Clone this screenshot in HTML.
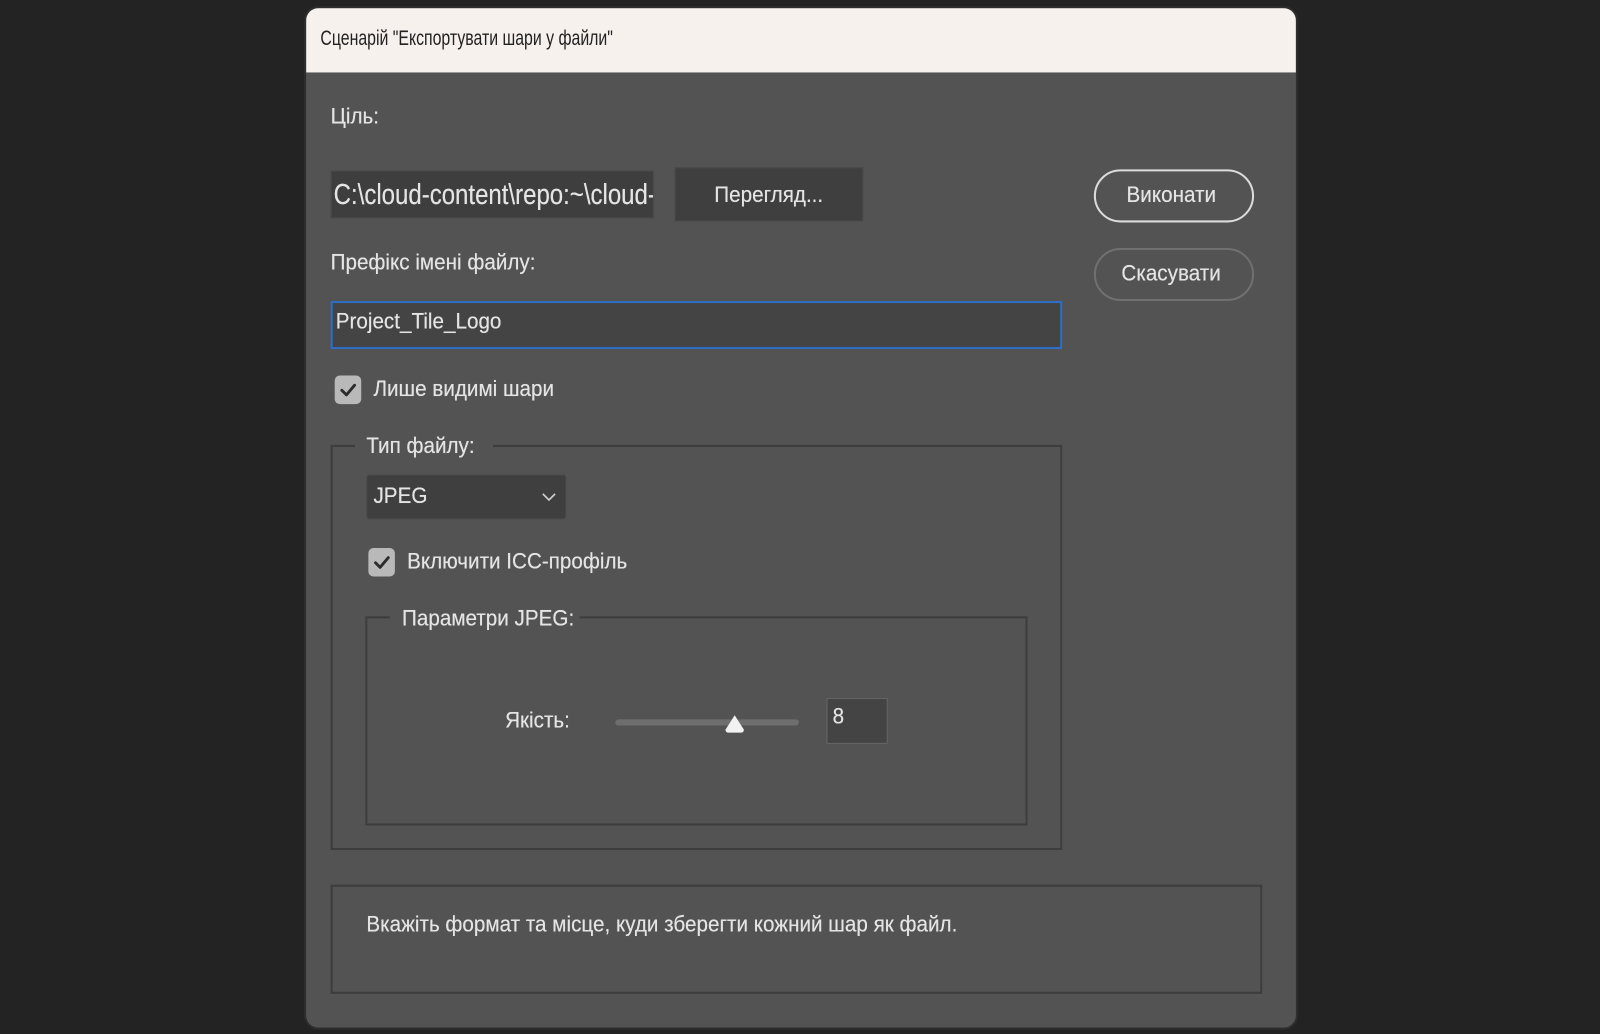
<!DOCTYPE html>
<html><head><meta charset="utf-8"><style>
*{margin:0;padding:0;box-sizing:border-box}
body{width:1600px;height:1033px;background:#232323;position:relative;overflow:hidden;font-family:"Liberation Sans","DejaVu Sans",sans-serif;}
#w{position:absolute;left:0;top:0;width:1568px;height:1013px;transform:scale(1.0204);transform-origin:0 0}
.a{position:absolute}
.t{position:absolute;white-space:nowrap;transform:scaleX(0.92);transform-origin:left center;color:#e4e4e4;font-size:22px;line-height:24px;text-shadow:0 0 0.4px #e4e4e4}
.dlg{left:300px;top:8px;width:970px;height:999px;background:#535353;border-radius:12px;overflow:hidden;box-shadow:0 0 0 2px #2e2e2e}
.title{left:0;top:0;width:970px;height:63px;background:#f7f1ee}
.box{position:absolute;border:2px solid #3d3d3d}
.cb{position:absolute;width:26px;height:28px;background:#b9b9b9;border-radius:5px}
</style></head><body><div id="w">
<div class="a dlg">
 <div class="a title"></div>
</div>
<div class="t" style="left:314px;top:26px;color:#222;font-size:21px;transform:scaleX(0.74);text-shadow:none">Сценарій "Експортувати шари у файли"</div>
<div class="t" style="left:324px;top:102px">Ціль:</div>
<div class="a" style="left:324px;top:167px;width:317px;height:47px;background:#3e3e3e;border:1px solid #4c4c4c;overflow:hidden">
 <div class="t" style="left:2px;top:8px;font-size:28px;line-height:30px;transform:scaleX(0.84)">C:\cloud-content\repo:~\cloud-content</div>
</div>
<div class="a" style="left:661px;top:164px;width:185px;height:53px;background:#3f3f3f;border:1px solid #4a4a4a"></div>
<div class="t" style="left:700px;top:179px">Перегляд...</div>
<div class="a" style="left:1072px;top:166px;width:157px;height:52px;border:2px solid #dcdcdc;border-radius:27px"></div>
<div class="t" style="left:1104px;top:179px">Виконати</div>
<div class="a" style="left:1072px;top:243px;width:157px;height:52px;border:2px solid #707070;border-radius:27px"></div>
<div class="t" style="left:1099px;top:256px">Скасувати</div>
<div class="t" style="left:324px;top:245px">Префікс імені файлу:</div>
<div class="a" style="left:324px;top:295px;width:717px;height:47px;background:#444;border:2px solid #2f6ec5"></div>
<div class="t" style="left:329px;top:303px">Project_Tile_Logo</div>
<div class="cb" style="left:328px;top:368px"></div>
<svg class="a" style="left:328px;top:368px" width="26" height="28"><path d="M7 14.5 L11.5 19 L19.5 9.5" stroke="#2c2c2c" stroke-width="2.8" fill="none" stroke-linecap="round" stroke-linejoin="round"/></svg>
<div class="t" style="left:366px;top:369px">Лише видимі шари</div>
<div class="box" style="left:324px;top:436px;width:717px;height:397px"></div>
<div class="a" style="left:348px;top:425px;width:135px;height:24px;background:#535353"></div>
<div class="t" style="left:359px;top:425px">Тип файлу:</div>
<div class="a" style="left:359px;top:465px;width:196px;height:44px;background:#3f3f3f;border:1px solid #4a4a4a;border-radius:3px"></div>
<div class="t" style="left:366px;top:474px">JPEG</div>
<svg class="a" style="left:530px;top:481px" width="16" height="12"><path d="M2 3 L8 9 L14 3" stroke="#cfcfcf" stroke-width="1.6" fill="none"/></svg>
<div class="cb" style="left:361px;top:537px"></div>
<svg class="a" style="left:361px;top:537px" width="26" height="28"><path d="M7 14.5 L11.5 19 L19.5 9.5" stroke="#2c2c2c" stroke-width="2.8" fill="none" stroke-linecap="round" stroke-linejoin="round"/></svg>
<div class="t" style="left:399px;top:538px">Включити ICC-профіль</div>
<div class="box" style="left:358px;top:604px;width:649px;height:205px"></div>
<div class="a" style="left:382px;top:594px;width:186px;height:24px;background:#535353"></div>
<div class="t" style="left:394px;top:594px">Параметри JPEG:</div>
<div class="t" style="left:495px;top:694px">Якість:</div>
<div class="a" style="left:603px;top:705px;width:180px;height:6px;background:#6e6e6e;border-radius:3px"></div>
<svg class="a" style="left:709px;top:699px" width="22" height="20"><path d="M11 2 L20 16 Q20 19 17 19 L5 19 Q2 19 2 16 Z" fill="#f2f2f2"/></svg>
<div class="a" style="left:810px;top:684px;width:60px;height:45px;background:#444;border:1px solid #666"></div>
<div class="t" style="left:816px;top:690px">8</div>
<div class="box" style="left:324px;top:867px;width:913px;height:107px"></div>
<div class="t" style="left:359px;top:894px">Вкажіть формат та місце, куди зберегти кожний шар як файл.</div>
</div></body></html>
